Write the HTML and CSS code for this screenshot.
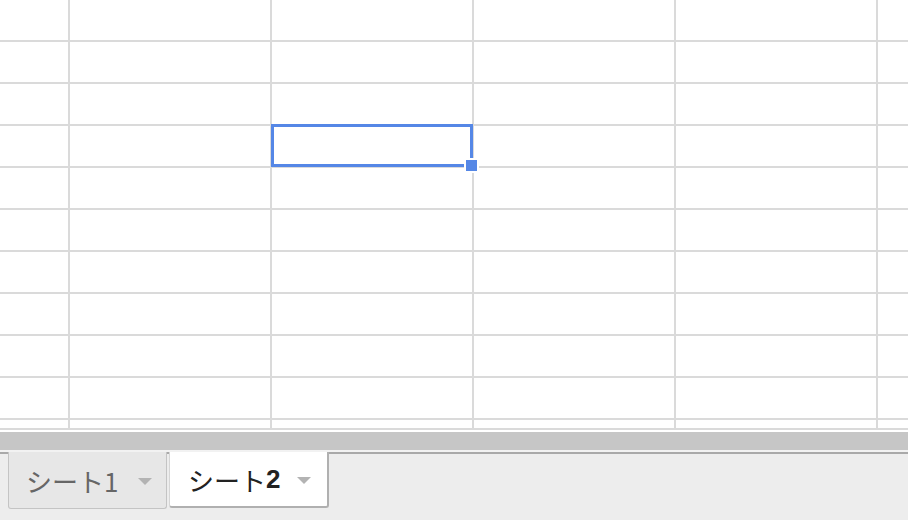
FILE: index.html
```html
<!DOCTYPE html>
<html lang="ja">
    <head>
        <meta charset="utf-8">
        <title>シート</title>
        <link rel="stylesheet" href="styles.css">
    </head>
    <body>
        <main class="grid">
            <div class="row"><div class="cell head"></div><div class="cell"></div><div class="cell"></div><div class="cell"></div><div class="cell"></div><div class="cell tail"></div></div>
            <div class="row"><div class="cell head"></div><div class="cell"></div><div class="cell"></div><div class="cell"></div><div class="cell"></div><div class="cell tail"></div></div>
            <div class="row"><div class="cell head"></div><div class="cell"></div><div class="cell"></div><div class="cell"></div><div class="cell"></div><div class="cell tail"></div></div>
            <div class="row"><div class="cell head"></div><div class="cell"></div><div class="cell"></div><div class="cell"></div><div class="cell"></div><div class="cell tail"></div></div>
            <div class="row"><div class="cell head"></div><div class="cell"></div><div class="cell"></div><div class="cell"></div><div class="cell"></div><div class="cell tail"></div></div>
            <div class="row"><div class="cell head"></div><div class="cell"></div><div class="cell"></div><div class="cell"></div><div class="cell"></div><div class="cell tail"></div></div>
            <div class="row"><div class="cell head"></div><div class="cell"></div><div class="cell"></div><div class="cell"></div><div class="cell"></div><div class="cell tail"></div></div>
            <div class="row"><div class="cell head"></div><div class="cell"></div><div class="cell"></div><div class="cell"></div><div class="cell"></div><div class="cell tail"></div></div>
            <div class="row"><div class="cell head"></div><div class="cell"></div><div class="cell"></div><div class="cell"></div><div class="cell"></div><div class="cell tail"></div></div>
            <div class="row"><div class="cell head"></div><div class="cell"></div><div class="cell"></div><div class="cell"></div><div class="cell"></div><div class="cell tail"></div></div>
            <div class="row"><div class="cell head"></div><div class="cell"></div><div class="cell"></div><div class="cell"></div><div class="cell"></div><div class="cell tail"></div></div>
            <div class="selection"><span class="handle"></span></div>
        </main>
        <div class="scrollbar"></div>
        <footer class="tabs">
            <div class="tab">シート1<span class="caret"></span></div>
            <div class="tab active">シート<b>2</b><span class="caret"></span></div>
        </footer>
    </body>
</html>
```

FILE: styles.css
```css
:root {
    --line: #dadada;
    --select: #5587e6;
    --row-height: 42px;
    --tab-bar: #ededed;
}
* { padding: 0; margin: 0; box-sizing: border-box; }
html, body { height: 100%; }
body {
    display: flex; flex-flow: column;
    background-color: white; overflow: hidden;
    font-family: "Noto Sans CJK JP", "Noto Sans", sans-serif;
}
/* grid */
.grid {
    position: relative;
    height: 430px; overflow: hidden;
    border-bottom: 2px solid var(--line);
    flex: none;
}
.row { display: flex; height: var(--row-height); }
.cell {
    width: 202px; flex: none;
    border-right: 2px solid var(--line);
    border-bottom: 2px solid var(--line);
}
.cell.head { width: 70px; }
.cell.tail { flex: auto; border-right: none; }
.selection {
    position: absolute; left: 271px; top: 124px;
    width: 202px; height: 43px;
    border: 3px solid var(--select);
}
.handle {
    position: absolute; right: -9px; bottom: -9px;
    width: 15px; height: 15px;
    background-color: var(--select);
    border: 2px solid white;
}
/* horizontal scrollbar */
.scrollbar {
    flex: none; height: 18px; margin-top: 2px;
    background-color: #c6c6c6;
    border-bottom: 2px solid #f2f2f2;
    box-sizing: content-box;
}
/* sheet tabs */
.tabs {
    flex: auto;
    display: flex; align-items: flex-start;
    padding-left: 8px;
    background-color: var(--tab-bar);
    border-top: 2px solid #a9a9a9;
}
.tab {
    display: flex; align-items: center;
    height: 57px; margin-top: -2px;
    padding-left: 17px;
    font-size: 26px; color: #666;
    background-color: #e7e7e7;
    border: 1px solid #c4c4c4; border-top: none;
    border-radius: 0 0 3px 3px;
    width: 159px;
}
.tab.active {
    height: 56px; width: 160px; margin-left: 2px;
    padding-left: 18px;
    color: #222; background-color: white;
    border-color: #d6d6d6;
    border-right: 2px solid #b0b0b0; border-bottom: 2px solid #b0b0b0;
}
.tab b { font-weight: bold; font-family: "Liberation Sans", sans-serif; }
.caret {
    margin-left: 20px; margin-top: 2px;
    border-left: 7px solid transparent; border-right: 7px solid transparent;
    border-top: 7px solid #b3b3b3;
}
.tab.active .caret { margin-left: 17px; }
```
